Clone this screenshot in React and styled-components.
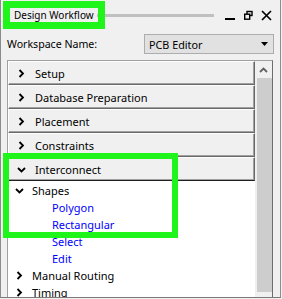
import React from "react";
import styled, { createGlobalStyle } from "styled-components";

const GlobalStyle = createGlobalStyle`
  html, body {
    margin: 0;
    padding: 0;
    background: #f0f0f0;
  }
  body {
    font-family: "Noto Sans", "Open Sans", sans-serif;
    font-size: 11px;
    color: #000;
  }
`;

const Window = styled.div`
  position: relative;
  width: 281px;
  height: 298px;
  box-sizing: border-box;
  border-left: 1px solid #8c8c8c;
  border-right: 1px solid #8c8c8c;
  border-bottom: 1px solid #7a7a7a;
  background: #f0f0f0;
  display: flex;
  flex-direction: column;
  overflow: hidden;
`;

const TitleBar = styled.div`
  height: 34px;
  flex-shrink: 0;
  display: flex;
  align-items: center;
  padding: 0 8px 4px 13px;
  box-sizing: border-box;
`;

const Title = styled.span`
  font-size: 10px;
  white-space: nowrap;
`;

const Grip = styled.div`
  flex: 1;
  height: 3px;
  margin: 1px 11px 0 3px;
  background: #c0c0c0;
`;

const Controls = styled.div`
  display: flex;
  align-items: center;
  gap: 8px;
`;

const WorkspaceRow = styled.div`
  height: 20px;
  flex-shrink: 0;
  display: flex;
  align-items: center;
  padding: 0 6px;
`;

const Label = styled.span`
  font-size: 10.6px;
`;

const Select = styled.div`
  margin-left: auto;
  width: 130px;
  height: 20px;
  box-sizing: border-box;
  border: 1px solid #adadad;
  background: #e1e1e1;
  display: flex;
  align-items: center;
  justify-content: space-between;
  padding: 0 5px 0 4px;
  font-size: 10.8px;
`;

const ListFrame = styled.div`
  flex: 1;
  margin: 6px 7px 0 6px;
  border-top: 1px solid #a0a0a0;
  border-left: 1px solid #a0a0a0;
  border-right: 1px solid #6e6e6e;
  display: flex;
  min-height: 0;
`;

const Content = styled.div`
  width: 247px;
  display: flex;
  flex-direction: column;
`;

const Header = styled.div`
  height: 24px;
  flex-shrink: 0;
  box-sizing: border-box;
  display: flex;
  align-items: center;
  padding-left: 8px;
  gap: 9px;
  background: #f0f0f0;
  border-top: 1px solid #fff;
  border-left: 1px solid #fff;
  border-right: 1px solid #696969;
  border-bottom: 1px solid ${(p) => (p.open ? "#202020" : "#696969")};
  box-shadow: inset -1px -1px 0 #a0a0a0;
  font-size: 11px;
`;

const Tree = styled.div`
  flex: 1;
  background: #fff;
  padding-top: 1px;
`;

const TreeRow = styled.div`
  height: 17px;
  display: flex;
  align-items: center;
  padding-left: ${(p) => (p.child ? 44 : 7)}px;
  gap: 8px;
  color: ${(p) => (p.child ? "#0000ff" : "#000")};
  font-size: 11px;
  white-space: nowrap;
`;

const Arrow = styled.span`
  width: 9px;
  display: flex;
  justify-content: center;
`;

const Scrollbar = styled.div`
  width: 17px;
  margin-left: auto;
  background: #f0f0f0;
  display: flex;
  flex-direction: column;
  align-items: center;
`;

const ScrollButton = styled.div`
  height: 17px;
  width: 100%;
  display: flex;
  align-items: center;
  justify-content: center;
`;

const Thumb = styled.div`
  width: 15px;
  height: 214px;
  margin-left: 1px;
  background: #cdcdcd;
`;

const Highlight = styled.div`
  position: absolute;
  border: ${(p) => p.w}px solid #1ff51a;
  box-sizing: border-box;
  pointer-events: none;
`;

const Chevron = ({ open }) => (
  <svg width="9" height="9" viewBox="0 0 9 9">
    {open ? (
      <polyline points="1,3 4.5,6.5 8,3" fill="none" stroke="#000" strokeWidth="1.8" />
    ) : (
      <polyline points="2.5,1 6,4.5 2.5,8" fill="none" stroke="#000" strokeWidth="1.8" />
    )}
  </svg>
);

const sections = ["Setup", "Database Preparation", "Placement", "Constraints"];

const App = () => {
  return (
    <>
      <GlobalStyle />
      <Window>
        <TitleBar>
          <Title>Design Workflow</Title>
          <Grip />
          <Controls>
            <svg width="11" height="11" viewBox="0 0 11 11">
              <rect x="0" y="8" width="10" height="2" fill="#000" />
            </svg>
            <svg width="9" height="11" viewBox="0 0 9 11">
              <rect x="3" y="1.5" width="5" height="4" fill="none" stroke="#000" strokeWidth="1.4" />
              <rect x="0.7" y="4.2" width="5" height="5" fill="#f0f0f0" stroke="#000" strokeWidth="1.4" />
            </svg>
            <svg width="11" height="11" viewBox="0 0 11 11">
              <path d="M1 1 L10 10 M10 1 L1 10" stroke="#000" strokeWidth="1.7" />
            </svg>
          </Controls>
        </TitleBar>

        <WorkspaceRow>
          <Label>Workspace Name:</Label>
          <Select>
            <span>PCB Editor</span>
            <svg width="7" height="4" viewBox="0 0 7 4">
              <polygon points="0,0 7,0 3.5,4" fill="#000" />
            </svg>
          </Select>
        </WorkspaceRow>

        <ListFrame>
          <Content>
            {sections.map((s) => (
              <Header key={s}>
                <Arrow>
                  <Chevron />
                </Arrow>
                {s}
              </Header>
            ))}
            <Header open>
              <Arrow>
                <Chevron open />
              </Arrow>
              Interconnect
            </Header>
            <Tree>
              <TreeRow>
                <Arrow>
                  <Chevron open />
                </Arrow>
                Shapes
              </TreeRow>
              <TreeRow child>Polygon</TreeRow>
              <TreeRow child>Rectangular</TreeRow>
              <TreeRow child>Select</TreeRow>
              <TreeRow child>Edit</TreeRow>
              <TreeRow>
                <Arrow>
                  <Chevron />
                </Arrow>
                Manual Routing
              </TreeRow>
              <TreeRow>
                <Arrow>
                  <Chevron />
                </Arrow>
                Timing
              </TreeRow>
            </Tree>
          </Content>
          <Scrollbar>
            <ScrollButton>
              <svg width="9" height="6" viewBox="0 0 9 6">
                <polyline points="1,5 4.5,1.5 8,5" fill="none" stroke="#606060" strokeWidth="1.8" />
              </svg>
            </ScrollButton>
            <Thumb />
          </Scrollbar>
        </ListFrame>

        <Highlight w={7} style={{ left: 2, top: 1, width: 102, height: 28 }} />
        <Highlight w={6} style={{ left: 2, top: 153, width: 175, height: 85 }} />
      </Window>
    </>
  );
};

export default App;
